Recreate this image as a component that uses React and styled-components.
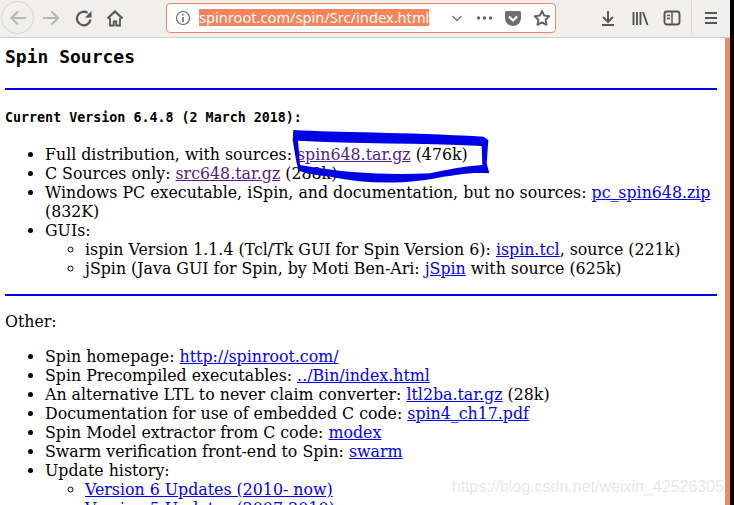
import styled, { createGlobalStyle } from "styled-components";

const GlobalStyle = createGlobalStyle`
  html, body {
    margin: 0;
    padding: 0;
    background: #000;
    overflow: hidden;
  }
`;

const Window = styled.div`
  width: 730px;
  height: 505px;
  display: flex;
  flex-direction: column;
  background: #fff;
  overflow: hidden;
`;

const Toolbar = styled.div`
  height: 37px;
  flex: none;
  display: flex;
  align-items: center;
  background: #f0efed;
  border-bottom: 1px solid #cfcfcc;
  padding-left: 1px;
`;

const ToolbarRow = styled.div`
  height: 35px;
  margin-bottom: 2px;
  display: flex;
  align-items: center;
`;

const BackCircle = styled.div`
  width: 31px;
  height: 31px;
  border: 1px solid #d4d4d2;
  border-radius: 50%;
  display: flex;
  align-items: center;
  justify-content: center;
  flex: none;
`;

const NavIcon = styled.div`
  width: 18px;
  height: 18px;
  margin-left: ${(p) => p.$ml || 0}px;
  flex: none;
  display: flex;
  align-items: center;
  justify-content: center;
`;

const UrlBar = styled.div`
  width: 390px;
  height: 30px;
  margin-left: 42px;
  flex: none;
  box-sizing: border-box;
  background: #fff;
  border: 1px solid #f0875c;
  border-radius: 4px;
  display: flex;
  align-items: center;
  padding-left: 7px;
`;

const UrlText = styled.span`
  font: 14.65px "Noto Sans", sans-serif;
  color: #fff;
  background: #f4845a;
  margin-left: 7px;
  line-height: 17px;
`;

const UrlActions = styled.div`
  margin-left: 21px;
  display: flex;
  align-items: center;
  gap: 11px;
`;

const Divider = styled.div`
  width: 1px;
  height: 34px;
  background: #d9d9d6;
  margin-left: 10px;
`;

const Body = styled.div`
  flex: 1;
  display: flex;
  min-height: 0;
`;

const Page = styled.div`
  flex: 1;
  padding: 0 8px 0 5px;
  font: 15.8px/19px "DejaVu Serif", serif;
  color: #000;
  overflow: hidden;
  position: relative;
`;

const Scrollbar = styled.div`
  width: 5px;
  background: #ec8d63;
  flex: none;
`;

const Heading = styled.h2`
  font: bold 18px/21px "DejaVu Sans Mono", monospace;
  margin: 8px 0 0;
`;

const Rule = styled.hr`
  border: none;
  height: 2px;
  background: #0000ee;
  margin: ${(p) => p.$m || "21px 0 0"};
  width: 712px;
`;

const SubHeading = styled.div`
  font: bold 13.33px/16px "DejaVu Sans Mono", monospace;
  margin-top: 20px;
`;

const List = styled.ul`
  margin: ${(p) => p.$m || "19px 0 0"};
  padding: 0 0 0 40px;
  list-style: disc;
`;

const SubList = styled.ul`
  margin: 0;
  padding: 0 0 0 40px;
  list-style: circle;
`;

const Link = styled.a`
  color: ${(p) => (p.$visited ? "#551a8b" : "#0000ee")};
  text-decoration: underline;
`;

const Plain = styled.p`
  margin: 16px 0 0;
`;

const Scribble = styled.svg`
  position: absolute;
  left: 270px;
  top: 82px;
`;

const Watermark = styled.div`
  position: absolute;
  right: 1px;
  top: 440px;
  font: 16px "Liberation Sans", sans-serif;
  color: rgba(190, 190, 190, 0.4);
`;

const Ico = ({ children, w = 18, h = 18 }) => (
  <svg width={w} height={h} viewBox={`0 0 ${w} ${h}`} fill="none">
    {children}
  </svg>
);

export default function App() {
  return (
    <>
      <GlobalStyle />
      <Window>
        <Toolbar>
          <ToolbarRow>
            <BackCircle>
              <Ico>
                <path d="M17 9H2M9 2.500L2.500 9 9 15.500" stroke="#b5b5b3" strokeWidth="2" />
              </Ico>
            </BackCircle>
            <NavIcon $ml={8}>
              <Ico>
                <path d="M1 9h15M9.500 2.500L16 9l-6.500 6.500" stroke="#b5b5b3" strokeWidth="2" />
              </Ico>
            </NavIcon>
            <NavIcon $ml={15}>
              <Ico>
                <path d="M15.500 10.500A6.800 6.800 0 1 1 12.500 3.800" stroke="#555" strokeWidth="2.200" />
                <path d="M16.500 2v6.500H10z" fill="#555" />
              </Ico>
            </NavIcon>
            <NavIcon $ml={13}>
              <Ico>
                <path d="M1.500 9.500L9 2.500l7.500 7" stroke="#555" strokeWidth="2.200" />
                <path d="M4 9v7.500h3.700v-4h2.600v4H14V9" stroke="#555" strokeWidth="1.800" />
              </Ico>
            </NavIcon>
            <UrlBar>
              <Ico>
                <circle cx="9" cy="9" r="6.500" stroke="#666" strokeWidth="1.200" />
                <path d="M9 8v5M9 5v1.500" stroke="#666" strokeWidth="1.500" />
              </Ico>
              <UrlText>spinroot.com/spin/Src/index.html</UrlText>
              <UrlActions>
                <Ico w={14}>
                  <path d="M2.500 7l4.500 4.500L11.500 7" stroke="#777" strokeWidth="1.400" />
                </Ico>
                <Ico>
                  <circle cx="3.500" cy="9" r="1.700" fill="#666" />
                  <circle cx="9.500" cy="9" r="1.700" fill="#666" />
                  <circle cx="15.500" cy="9" r="1.700" fill="#666" />
                </Ico>
                <Ico>
                  <path d="M1 3.500a1.500 1.500 0 0 1 1.500-1.500h13A1.500 1.500 0 0 1 17 3.500V9a8 8 0 0 1-16 0z" fill="#6f6f6f" />
                  <path d="M5 7.500l4 4 4-4" stroke="#fff" strokeWidth="2.200" />
                </Ico>
                <Ico>
                  <path d="M9 2l2.200 4.600 5 .7-3.600 3.500.9 5L9 13.400 4.500 15.800l.9-5L1.800 7.300l5-.7z" stroke="#666" strokeWidth="2" strokeLinejoin="round" />
                </Ico>
              </UrlActions>
            </UrlBar>
            <NavIcon $ml={43}>
              <Ico>
                <path d="M9 2v11M4 8l5 5 5-5M3 16h12" stroke="#555" strokeWidth="1.900" />
              </Ico>
            </NavIcon>
            <NavIcon $ml={14}>
              <Ico>
                <path d="M2.500 3v13M6 3v13M9.500 3v13M12 3l4.500 13" stroke="#555" strokeWidth="1.900" />
              </Ico>
            </NavIcon>
            <NavIcon $ml={14}>
              <Ico>
                <rect x="1.500" y="2.500" width="15" height="13" rx="2.500" stroke="#555" strokeWidth="1.900" />
                <path d="M9 3v12M4 6.500h3M4 9.500h3" stroke="#555" strokeWidth="1.400" />
              </Ico>
            </NavIcon>
            <Divider />
            <NavIcon $ml={10}>
              <Ico>
                <path d="M3 4h12M3 9h12M3 14h12" stroke="#555" strokeWidth="1.900" />
              </Ico>
            </NavIcon>
          </ToolbarRow>
        </Toolbar>
        <Body>
          <Page>
            <Heading>Spin Sources</Heading>
            <Rule />
            <SubHeading>Current Version 6.4.8 (2 March 2018):</SubHeading>
            <List>
              <li>Full distribution, with sources: <Link $visited>spin648.tar.gz</Link> (476k)</li>
              <li>C Sources only: <Link $visited>src648.tar.gz</Link> (288k)</li>
              <li>Windows PC executable, iSpin, and documentation, but no sources: <Link>pc_spin648.zip</Link> (832K)</li>
              <li>GUIs:
                <SubList>
                  <li>ispin Version 1.1.4 (Tcl/Tk GUI for Spin Version 6): <Link>ispin.tcl</Link>, source (221k)</li>
                  <li>jSpin (Java GUI for Spin, by Moti Ben-Ari: <Link>jSpin</Link> with source (625k)</li>
                </SubList>
              </li>
            </List>
            <Rule $m="16px 0 0" />
            <Plain>Other:</Plain>
            <List $m="16px 0 0">
              <li>Spin homepage: <Link>http://spinroot.com/</Link></li>
              <li>Spin Precompiled executables: <Link>../Bin/index.html</Link></li>
              <li>An alternative LTL to never claim converter: <Link>ltl2ba.tar.gz</Link> (28k)</li>
              <li>Documentation for use of embedded C code: <Link>spin4_ch17.pdf</Link></li>
              <li>Spin Model extractor from C code: <Link>modex</Link></li>
              <li>Swarm verification front-end to Spin: <Link>swarm</Link></li>
              <li>Update history:
                <SubList>
                  <li><Link>Version 6 Updates (2010- now)</Link></li>
                  <li><Link>Version 5 Updates (2007-2010)</Link></li>
                </SubList>
              </li>
            </List>
            <Scribble width="240" height="70" viewBox="0 0 720 210">
              <path
                fillRule="evenodd"
                fill="#0000e6"
                d="M70 30C200 38 400 36 640 50L655 60L650 130L658 160C600 155 560 165 520 170C420 192 300 195 180 170C140 165 100 160 85 150L78 120L68 60Z M84 62C250 72 450 68 635 78L637 135C570 140 530 150 480 160C350 165 230 160 90 135Z"
              />
            </Scribble>
            <Watermark>https://blog.csdn.net/weixin_42526305</Watermark>
          </Page>
          <Scrollbar />
        </Body>
      </Window>
    </>
  );
}
